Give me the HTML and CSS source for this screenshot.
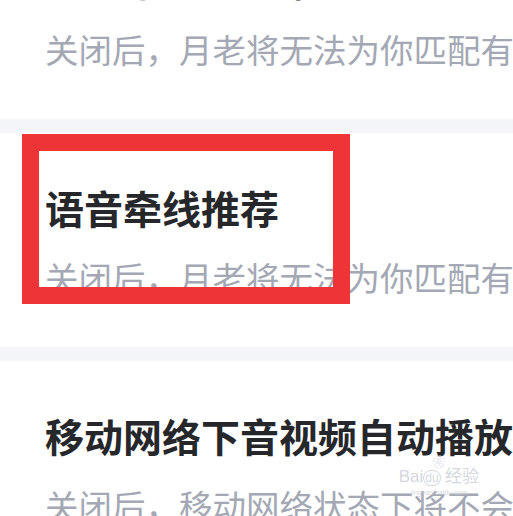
FILE: index.html
```html
<!DOCTYPE html>
<html lang="zh-CN">
  <head>
    <meta charset="UTF-8" />
    <meta name="viewport" content="width=device-width, initial-scale=1.0" />
    <title>设置</title>
    <link rel="stylesheet" href="styles.css">
  </head>
  <body>
    <div class="list">
      <div class="item item-first">
        <div class="title">月老牵线匹配推荐</div>
        <div class="desc">关闭后，月老将无法为你匹配有缘人</div>
      </div>
      <div class="gap"></div>
      <div class="item">
        <div class="title">语音牵线推荐</div>
        <div class="desc">关闭后，月老将无法为你匹配有缘人</div>
        <div class="mark"></div>
      </div>
      <div class="gap"></div>
      <div class="item">
        <div class="title">移动网络下音视频自动播放</div>
        <div class="desc">关闭后，移动网络状态下将不会自动播放</div>
      </div>
    </div>

    <div class="watermark">
      <span class="wm-paw">&#x2740;</span>
      <span class="wm-logo">Bai<span class="wm-du">du</span> 经验</span>
      <span class="wm-url">jingyan.baidu.com</span>
    </div>
  </body>
</html>
```

FILE: styles.css
```css
body {
  margin: 0;
  padding: 0;
  font-family: "Noto Sans CJK SC", "Noto Sans", sans-serif;
  background-color: #fff;
  overflow: hidden;
  height: 516px;
  position: relative;
}

.list {
  display: flex;
  flex-direction: column;
}

.item {
  position: relative;
  padding: 52px 45px 50px;
  white-space: nowrap;
  overflow: hidden;
  background-color: #fff;
}

.item-first {
  margin-top: -95px;
}

.title {
  font-size: 39px;
  line-height: 44px;
  font-weight: 700;
  color: #26272b;
}

.desc {
  margin-top: 28px;
  font-size: 33.5px;
  line-height: 40px;
  color: #a3a8b4;
}

.gap {
  height: 14px;
  background-color: #f4f5f8;
}

/* red highlight box drawn over the screenshot */
.mark {
  position: absolute;
  left: 22px;
  top: 1px;
  width: 294px;
  height: 136px;
  border: 17px solid #ee3437;
}

.watermark {
  position: absolute;
  left: 393px;
  top: 454px;
  width: 92px;
  color: rgba(200, 204, 212, 0.8);
  text-align: center;
  pointer-events: none;
}

.wm-paw {
  display: block;
  font-size: 13px;
  line-height: 13px;
}

.wm-logo {
  display: block;
  font-family: "Liberation Sans", sans-serif;
  font-size: 17px;
  line-height: 19px;
}

.wm-du {
  font-size: 12px;
  border-radius: 8px;
  border: 1px solid rgba(200, 204, 212, 0.8);
  padding: 0 1px;
}

.wm-url {
  display: block;
  font-family: "Liberation Sans", sans-serif;
  font-size: 7px;
  line-height: 9px;
}
```
